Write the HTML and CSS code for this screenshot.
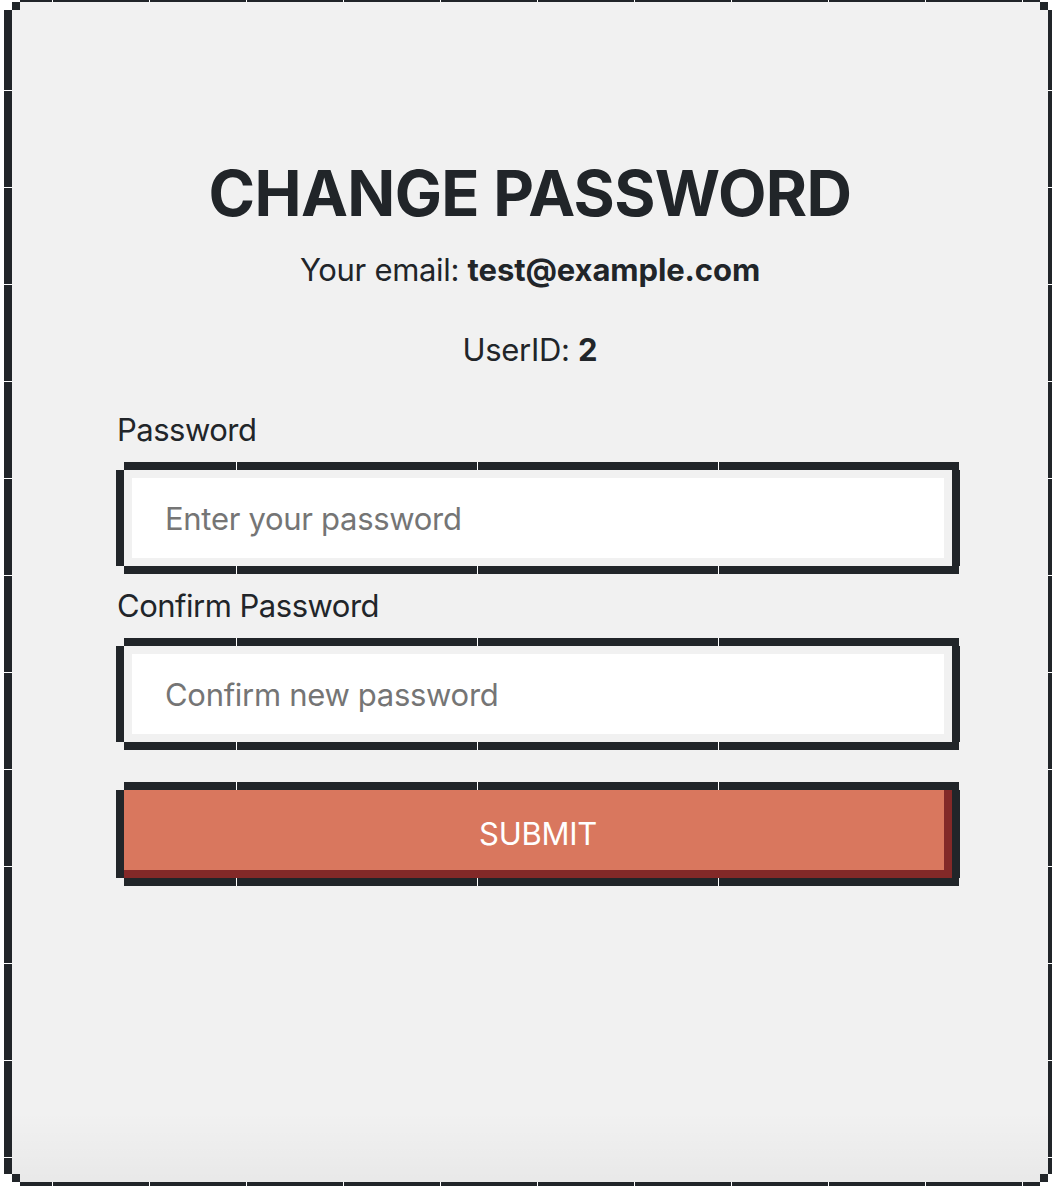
FILE: index.html
```html
<!DOCTYPE html>
<html lang="en">
<head>
<meta charset="utf-8">
<title>Change Password</title>
<link rel="stylesheet" href="styles.css">
</head>
<body>
<main class="frame">
  <h1 class="title">CHANGE PASSWORD</h1>
  <p class="info info-email">Your email: <strong>test@example.com</strong></p>
  <p class="info info-id">UserID: <strong>2</strong></p>
  <form class="form">
    <label class="label" for="pw">Password</label>
    <div class="field">
      <input class="input" id="pw" type="password" placeholder="Enter your password">
    </div>
    <label class="label" for="pw2">Confirm Password</label>
    <div class="field">
      <input class="input" id="pw2" type="password" placeholder="Confirm new password">
    </div>
    <div class="field field-btn">
      <button class="btn" type="submit">SUBMIT</button>
    </div>
  </form>
</main>
</body>
</html>
```
FILE: styles.css
```css
html, body {
  margin: 0;
  padding: 0;
  overflow: hidden;
  background: #ffffff;
}

body {
  font-family: Inter, "Noto Sans", "Liberation Sans", sans-serif;
  color: #212529;
}

.frame {
  display: block;
  box-sizing: border-box;
  margin: -6px 0 0 4px;
  width: 1052px;
  height: 1196px;
  padding-top: 167px;
  background:
    /* corners */
    linear-gradient(#212529, #212529) 8px 8px / 8px 8px no-repeat,
    linear-gradient(#212529, #212529) right 8px top 8px / 8px 8px no-repeat,
    linear-gradient(#212529, #212529) left 8px bottom 8px / 8px 8px no-repeat,
    linear-gradient(#212529, #212529) right 8px bottom 8px / 8px 8px no-repeat,
    /* top & bottom bars */
    repeating-linear-gradient(90deg, #212529 0 32px, #ffffff 32px 33px, #212529 33px 97px) 16px 0 / calc(100% - 32px) 8px no-repeat,
    repeating-linear-gradient(90deg, #212529 0 32px, #ffffff 32px 33px, #212529 33px 97px) 16px 100% / calc(100% - 32px) 8px no-repeat,
    /* left & right bars */
    repeating-linear-gradient(180deg, #212529 0 80px, #ffffff 80px 81px, #212529 81px 97px) 0 16px / 8px calc(100% - 32px) no-repeat,
    repeating-linear-gradient(180deg, #212529 0 80px, #ffffff 80px 81px, #212529 81px 97px) 100% 16px / 8px calc(100% - 32px) no-repeat,
    /* subtle bottom shade */
    linear-gradient(180deg, rgba(0,0,0,0), rgba(0,0,0,0.035)) 8px calc(100% - 8px) / calc(100% - 16px) 70px no-repeat,
    /* fill */
    linear-gradient(#f1f1f1, #f1f1f1) 8px 8px / calc(100% - 16px) calc(100% - 16px) no-repeat;
}

.title {
  margin: 0;
  font-size: 63px;
  line-height: 64px;
  font-weight: 700;
  text-align: center;
  letter-spacing: -0.65px;
}

.info {
  margin: 40px 0 0;
  font-size: 31px;
  line-height: 40px;
  text-align: center;
  letter-spacing: -0.3px;
}

.info-email {
  margin-top: 25px;
}

.info strong {
  font-weight: 700;
  letter-spacing: -0.1px;
}

.form {
  display: flex;
  flex-direction: column;
  margin: 40px 0 0 112px;
  width: 844px;
}

.label {
  display: block;
  font-size: 31px;
  line-height: 40px;
  margin-left: 1px;
  letter-spacing: -0.5px;
}

.field {
  box-sizing: border-box;
  margin: 12px 0;
  padding: 16px;
  height: 112px;
  background:
    repeating-linear-gradient(90deg, #212529 0 112px, #ffffff 112px 113px, #212529 113px 241px) 8px 0 / calc(100% - 9px) 8px no-repeat,
    repeating-linear-gradient(90deg, #212529 0 112px, #ffffff 112px 113px, #212529 113px 241px) 8px 100% / calc(100% - 9px) 8px no-repeat,
    linear-gradient(#212529, #212529) 0 8px / 8px calc(100% - 16px) no-repeat,
    linear-gradient(#212529, #212529) 100% 8px / 8px calc(100% - 16px) no-repeat;
}

.input {
  display: block;
  box-sizing: border-box;
  width: 100%;
  height: 80px;
  margin: 0;
  border: 0;
  outline: none;
  background: #ffffff;
  padding: 0 0 0 33px;
  font-family: inherit;
  font-size: 31px;
  letter-spacing: -0.3px;
  color: #212529;
}

.input::placeholder {
  color: #757575;
  opacity: 1;
}

.field-btn {
  margin-top: 20px;
  padding: 8px;
  height: 104px;
}

.btn {
  display: block;
  box-sizing: border-box;
  width: 100%;
  height: 88px;
  margin: 0;
  border: 0;
  background: #d9775e;
  box-shadow: inset -8px -8px 0 0 #832928;
  color: #ffffff;
  font-family: inherit;
  font-size: 31px;
  letter-spacing: -0.3px;
  line-height: 88px;
  padding: 0;
  text-align: center;
  cursor: pointer;
}
```
